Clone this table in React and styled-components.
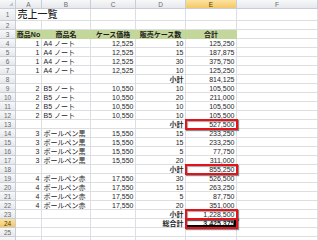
import React from 'react';
import styled, { createGlobalStyle, css } from 'styled-components';

const GlobalStyle = createGlobalStyle`
  html, body {
    margin: 0;
    padding: 0;
    background: #ffffff;
    overflow: hidden;
  }
  body {
    font-family: "Liberation Sans", "Noto Sans CJK JP", sans-serif;
  }
`;

const Sheet = styled.div`
  display: grid;
  grid-template-columns: 16px 26px 49px 45px 50px 51px 1fr;
  grid-template-rows: 9px 12px;
  grid-auto-rows: 9px;
  width: 318px;
  height: 240px;
  overflow: hidden;
  background: #ffffff;
`;

const headerBase = css`
  box-sizing: border-box;
  display: flex;
  align-items: center;
  justify-content: center;
  font-size: 6.5px;
  color: #6b6b6b;
  border-right: 1px solid #c9ced6;
  border-bottom: 1px solid #c9ced6;
  background: ${(p) =>
    p.$active
      ? 'linear-gradient(#fbe3a3, #f5c862)'
      : 'linear-gradient(#f7f8f9, #e6e8eb)'};
  ${(p) => p.$active && 'color: #4a3a10;'}
`;

const Corner = styled.div`
  ${headerBase};
  position: relative;
  &::after {
    content: '';
    position: absolute;
    right: 2px;
    bottom: 2px;
    border-left: 4px solid transparent;
    border-bottom: 4px solid #c3c7cc;
  }
`;

const ColHeader = styled.div`
  ${headerBase};
`;

const RowHeader = styled.div`
  ${headerBase};
`;

const Cell = styled.div`
  box-sizing: border-box;
  position: relative;
  display: flex;
  align-items: center;
  justify-content: ${(p) =>
    p.$align === 'right' ? 'flex-end' : p.$align === 'center' ? 'center' : 'flex-start'};
  grid-column: ${(p) => (p.$span ? `span ${p.$span}` : 'auto')};
  padding: 0 1.5px;
  font-size: ${(p) => (p.$title ? '10px' : '7px')};
  font-weight: ${(p) => (p.$bold ? 700 : p.$title ? 500 : 400)};
  color: #1e1e1e;
  white-space: nowrap;
  line-height: 1;
  border-right: 1px solid ${(p) => (p.$fill ? p.$fill : '#dcdee2')};
  border-bottom: 1px solid ${(p) => (p.$fill ? p.$fill : '#dcdee2')};
  background: ${(p) => p.$fill || 'transparent'};

  ${(p) =>
    p.$selected &&
    css`
      &::before {
        content: '';
        position: absolute;
        inset: -1px 0 0 -1px;
        border: 2px solid #000;
        z-index: 1;
      }
    `}

  ${(p) =>
    p.$mark &&
    css`
      &::after {
        content: '';
        position: absolute;
        inset: -1px -2px -2px -1px;
        border: 2px solid #e3131b;
        box-shadow: 1px 1px 1px rgba(0, 0, 0, 0.45), inset 1px 1px 1px rgba(0, 0, 0, 0.35);
        z-index: 2;
      }
    `}
`;

const GREEN = '#c4d79b';

const item = (no, name, price, qty, total) => [
  { t: no, a: 'right' },
  { t: name },
  { t: price, a: 'right' },
  { t: qty, a: 'right' },
  { t: total, a: 'right' },
  {},
];

const sub = (label, total, extra = {}) => [
  {},
  {},
  {},
  { t: label, a: 'right', b: true },
  { t: total, a: 'right', ...extra },
  {},
];

const blank = () => [{}, {}, {}, {}, {}, {}];

const rows = [
  [{ t: '売上一覧', title: true, span: 2 }, {}, {}, {}, {}],
  blank(),
  [
    { t: '商品No', a: 'center', b: true, fill: GREEN },
    { t: '商品名', a: 'center', b: true, fill: GREEN },
    { t: 'ケース価格', a: 'center', b: true, fill: GREEN },
    { t: '販売ケース数', a: 'center', b: true, fill: GREEN },
    { t: '合計', a: 'center', b: true, fill: GREEN },
    {},
  ],
  item(1, 'A4 ノート', '12,525', 10, '125,250'),
  item(1, 'A4 ノート', '12,525', 15, '187,875'),
  item(1, 'A4 ノート', '12,525', 30, '375,750'),
  item(1, 'A4 ノート', '12,525', 10, '125,250'),
  sub('小計', '814,125'),
  item(2, 'B5 ノート', '10,550', 10, '105,500'),
  item(2, 'B5 ノート', '10,550', 20, '211,000'),
  item(2, 'B5 ノート', '10,550', 10, '105,500'),
  item(2, 'B5 ノート', '10,550', 10, '105,500'),
  sub('小計', '527,500', { mark: true }),
  item(3, 'ボールペン黒', '15,550', 15, '233,250'),
  item(3, 'ボールペン黒', '15,550', 15, '233,250'),
  item(3, 'ボールペン黒', '15,550', 5, '77,750'),
  item(3, 'ボールペン黒', '15,550', 20, '311,000'),
  sub('小計', '855,250', { mark: true }),
  item(4, 'ボールペン赤', '17,550', 30, '526,500'),
  item(4, 'ボールペン赤', '17,550', 15, '263,250'),
  item(4, 'ボールペン赤', '17,550', 5, '87,750'),
  item(4, 'ボールペン赤', '17,550', 20, '351,000'),
  sub('小計', '1,228,500', { mark: true }),
  sub('総合計', '3,425,375', { mark: true, b: true, selected: true }),
  blank(),
  blank(),
];

const COLS = ['A', 'B', 'C', 'D', 'E', 'F'];
const ACTIVE_COL = 'E';
const ACTIVE_ROW = 24;
const LAST_LABELED_ROW = 25;

const App = () => (
  <>
    <GlobalStyle />
    <Sheet>
      <Corner />
      {COLS.map((c) => (
        <ColHeader key={c} $active={c === ACTIVE_COL}>
          {c}
        </ColHeader>
      ))}
      {rows.map((cells, i) => (
        <React.Fragment key={i}>
          <RowHeader $active={i + 1 === ACTIVE_ROW}>
            {i + 1 <= LAST_LABELED_ROW ? i + 1 : ''}
          </RowHeader>
          {cells.map((c, j) => (
            <Cell
              key={j}
              $align={c.a}
              $bold={c.b}
              $fill={c.fill}
              $title={c.title}
              $span={c.span}
              $mark={c.mark}
              $selected={c.selected}
            >
              {c.t}
            </Cell>
          ))}
        </React.Fragment>
      ))}
    </Sheet>
  </>
);

export default App;
